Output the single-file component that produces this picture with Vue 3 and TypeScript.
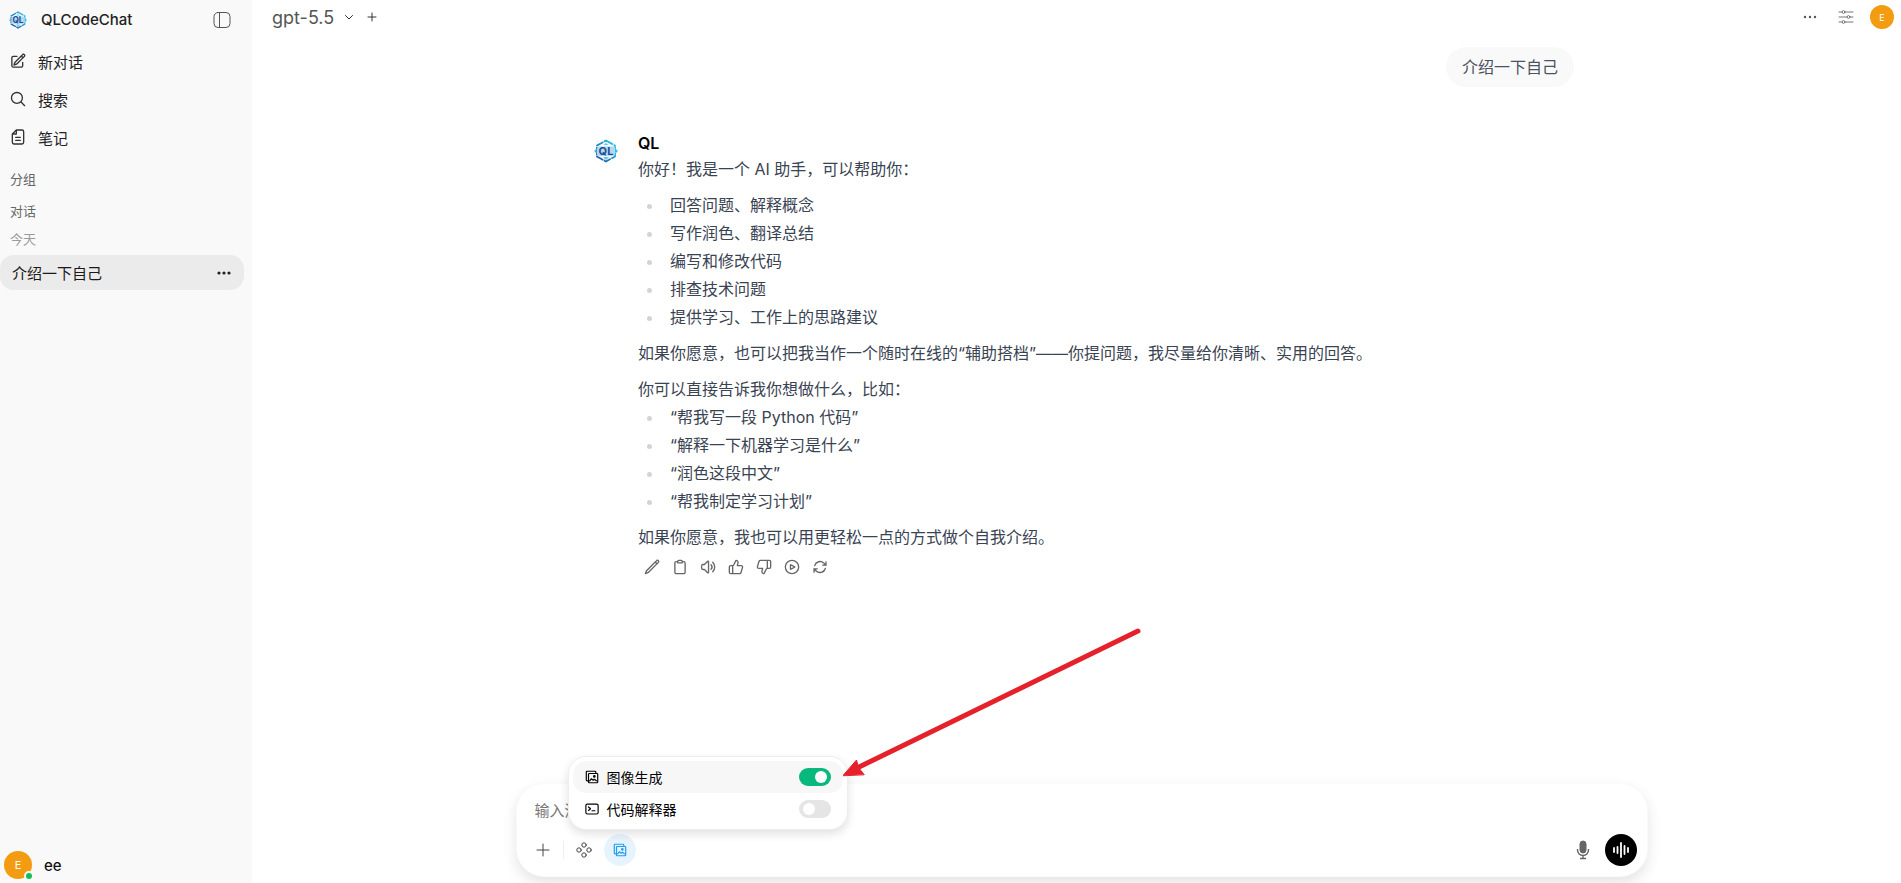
<script setup lang="ts">
import { ref } from 'vue'

interface NavItem { id: string; label: string }

const nav: NavItem[] = [
  { id: 'new', label: '新对话' },
  { id: 'search', label: '搜索' },
  { id: 'notes', label: '笔记' },
]
const abilities: string[] = ['回答问题、解释概念', '写作润色、翻译总结', '编写和修改代码', '排查技术问题', '提供学习、工作上的思路建议']
const examples: string[] = ['“帮我写一段 Python 代码”', '“解释一下机器学习是什么”', '“润色这段中文”', '“帮我制定学习计划”']
const actions: { label: string; d: string }[] = [
  { label: '编辑', d: 'M16.9 4.5l1.7-1.7a1.9 1.9 0 1 1 2.6 2.6L6.8 19.8a4.5 4.5 0 0 1-1.9 1.1L2.2 21.8l.9-2.7a4.5 4.5 0 0 1 1.1-1.9L16.9 4.5zM16.9 4.5l2.6 2.6' },
  { label: '复制', d: 'M8.5 4H6.5a2.2 2.2 0 0 0-2.2 2.2v13.6A2.2 2.2 0 0 0 6.5 22h11a2.2 2.2 0 0 0 2.2-2.2V6.2A2.2 2.2 0 0 0 17.5 4h-2M8.5 5.8V3.8A1.8 1.8 0 0 1 10.3 2h3.4a1.8 1.8 0 0 1 1.8 1.8v2z' },
  { label: '朗读', d: 'M19.1 4.9a10 10 0 0 1 0 14.2M16.5 8.5a5 5 0 0 1 0 7M6.7 8.2l4.800-4.700c.5-.5 1.300-.1 1.300.5v16c0 .6-.8 1-1.300.5l-4.800-4.700H4.500c-.9 0-1.700-.5-1.900-1.400a9.600 9.600 0 0 1 0-4.800c.2-.9 1-1.400 1.900-1.400z' },
  { label: '赞', d: 'M7 10v12M15 5.9L14 10h5.8a2 2 0 0 1 2 2.6l-2.4 8a2 2 0 0 1-1.9 1.4H4a2 2 0 0 1-2-2v-8a2 2 0 0 1 2-2h2.8a2 2 0 0 0 1.7-1.1L12 2a3.1 3.1 0 0 1 3 3.9z' },
  { label: '踩', d: 'M17 14V2M9 18.1L10 14H4.2a2 2 0 0 1-2-2.6l2.4-8A2 2 0 0 1 6.5 2H20a2 2 0 0 1 2 2v8a2 2 0 0 1-2 2h-2.8a2 2 0 0 0-1.7 1.1L12 22a3.1 3.1 0 0 1-3-3.9z' },
  { label: '继续生成', d: 'M22 12a10 10 0 1 1-20 0 10 10 0 0 1 20 0zM15.9 11.7a.4.4 0 0 1 0 .6l-5.6 3.1a.4.4 0 0 1-.6-.3V8.900a.4.4 0 0 1 .6-.3z' },
  { label: '重新生成', d: 'M16 9.3h5v-5M3 19.7v-5h5M3 14.7l3.2 3.2a8.3 8.3 0 0 0 13.8-3.7M4 9.9a8.3 8.3 0 0 1 13.8-3.7L21 9.3' },
]
const imageOn = ref(true)
const codeOn = ref(false)
const draft = ref('')
</script>

<template>
  <div class="app">
    <svg class="defs" aria-hidden="true">
      <defs>
        <linearGradient id="brand" x1="1" y1="0" x2="0" y2="1">
          <stop offset="0" stop-color="#2fd6e6" />
          <stop offset="0.5" stop-color="#2389cf" />
          <stop offset="1" stop-color="#1c4fa3" />
        </linearGradient>
        <symbol id="logo" viewBox="0 0 24 24">
          <path d="M12 1.500L21 6.500V17.500L12 22.500L3 17.500V6.500Z" fill="#f3fbff" stroke="url(#brand)" stroke-width="1.800" stroke-dasharray="8 .7" />
          <path d="M12 4l2.500 2h-5zM12 21l3-3H9z" fill="#35a9dc" opacity=".7" />
          <path d="M0 12l2.500-2.500v5zM24 12l-2.500-2.500v5z" fill="#2fc5e0" />
          <rect x="3" y="7.500" width="18" height="9.500" rx="2" fill="#b4d8ef" />
          <text x="12" y="16" text-anchor="middle" font-family="Inter, sans-serif" font-size="11" font-weight="700" fill="#1d4f97">QL</text>
        </symbol>
        <symbol id="images" viewBox="0 0 24 24">
          <path d="M18.500 5V3.500a1.300 1.300 0 0 0-1.300-1.300H3.500a1.300 1.300 0 0 0-1.300 1.300v13.700a1.300 1.300 0 0 0 1.300 1.300H5M7.300 6h13.200a1.300 1.300 0 0 1 1.300 1.300v13.200a1.300 1.300 0 0 1-1.300 1.300H7.300A1.300 1.300 0 0 1 6 20.500V7.300A1.300 1.300 0 0 1 7.300 6zM8 18.500l3-3.500 3 2.500 2-1.500 3.500 2.500" />
          <circle cx="16" cy="11" r="1.300" />
        </symbol>
      </defs>
    </svg>

    <aside class="sidebar">
      <header class="brand">
        <svg class="brand-logo"><use href="#logo" /></svg>
        <span class="brand-name">QLCodeChat</span>
        <button class="plain" aria-label="收起侧边栏">
          <svg class="ico panel" viewBox="0 0 18 18"><rect x="1" y="1.500" width="16" height="15" rx="4" /><path d="M6.500 1.500v15" /></svg>
        </button>
      </header>
      <nav>
        <button v-for="item in nav" :key="item.id" class="nav-item">
          <svg class="ico nav-ico" viewBox="0 0 24 24">
            <path v-if="item.id === 'new'" d="M16.900 4.500l1.700-1.700a1.900 1.900 0 1 1 2.600 2.600L10.600 16.100a4.500 4.500 0 0 1-1.900 1.100L6 18l.8-2.700a4.500 4.500 0 0 1 1.100-1.900zM16.900 4.500l2.600 2.600M19 14v5a2.300 2.300 0 0 1-2.300 2.300H5A2.300 2.300 0 0 1 2.800 19V7.300A2.300 2.300 0 0 1 5 5h5.500" />
            <path v-else-if="item.id === 'search'" d="M22 22l-5.800-5.800a8.200 8.200 0 1 0-11.600-11.600 8.200 8.200 0 0 0 11.600 11.600z" />
            <path v-else d="M9.500 1.500H18a2.500 2.500 0 0 1 2.500 2.500v16a2.500 2.500 0 0 1-2.500 2.500H6A2.500 2.500 0 0 1 3.500 20V7.500zM9.500 1.500v6h-6M8.500 12.500h7M8.500 17h7" />
          </svg>
          {{ item.label }}
        </button>
      </nav>
      <h2 class="section">分组</h2>
      <h2 class="section">对话</h2>
      <h3 class="day">今天</h3>
      <div class="chat-item">
        <a href="#">介绍一下自己</a>
        <button class="plain" aria-label="更多">
          <svg class="dots" viewBox="0 0 14 4"><circle cx="2" cy="2" r="1.600" /><circle cx="7" cy="2" r="1.600" /><circle cx="12" cy="2" r="1.600" /></svg>
        </button>
      </div>
      <button class="user">
        <span class="avatar">E<i class="online"></i></span>
        <span>ee</span>
      </button>
    </aside>

    <main class="main">
      <header class="topbar">
        <button class="model">
          gpt-5.5
          <svg class="ico chevron" viewBox="0 0 12 12"><path d="M2.500 4.500L6 8l3.500-3.500" /></svg>
        </button>
        <button class="plain" aria-label="添加模型"><svg class="ico small-plus" viewBox="0 0 12 12"><path d="M6 2v8M2 6h8" /></svg></button>
        <span class="grow"></span>
        <button class="plain" aria-label="更多选项">
          <svg class="dots top-dots" viewBox="0 0 14 4"><circle cx="2" cy="2" r="1.200" /><circle cx="7" cy="2" r="1.200" /><circle cx="12" cy="2" r="1.200" /></svg>
        </button>
        <button class="plain" aria-label="控制">
          <svg class="ico sliders" viewBox="0 0 16 14"><path d="M1 2h3M7 2h8M1 7h8M12 7h3M1 12h3M7 12h8" /><circle cx="5.500" cy="2" r="1.400" /><circle cx="10.500" cy="7" r="1.400" /><circle cx="5.500" cy="12" r="1.400" /></svg>
        </button>
        <button class="avatar top-avatar" aria-label="用户菜单">E</button>
      </header>

      <section class="thread">
        <p class="bubble">介绍一下自己</p>
        <article class="reply">
          <svg class="reply-logo"><use href="#logo" /></svg>
          <div class="body">
            <h1>QL</h1>
            <p>你好！我是一个 AI 助手，可以帮助你：</p>
            <ul class="spaced"><li v-for="a in abilities" :key="a">{{ a }}</li></ul>
            <p>如果你愿意，也可以把我当作一个随时在线的“辅助搭档”——你提问题，我尽量给你清晰、实用的回答。</p>
            <p class="lead">你可以直接告诉我你想做什么，比如：</p>
            <ul><li v-for="e in examples" :key="e">{{ e }}</li></ul>
            <p class="lead">如果你愿意，我也可以用更轻松一点的方式做个自我介绍。</p>
            <div class="actions">
              <button v-for="a in actions" :key="a.label" class="plain" :aria-label="a.label">
                <svg class="ico" viewBox="0 0 24 24"><path :d="a.d" /></svg>
              </button>
            </div>
          </div>
        </article>
      </section>

      <form class="composer" @submit.prevent>
        <input v-model="draft" class="prompt" type="text" placeholder="输入消息" aria-label="输入消息" />
        <div class="tools">
          <button type="button" class="tool" aria-label="添加"><svg class="ico plus" viewBox="0 0 14 14"><path d="M7 1v12M1 7h12" /></svg></button>
          <span class="divider"></span>
          <button type="button" class="tool" aria-label="工具">
            <svg class="ico quad" viewBox="0 0 16 16"><circle cx="8" cy="3" r="2.200" /><circle cx="3" cy="8" r="2.200" /><circle cx="13" cy="8" r="2.200" /><circle cx="8" cy="13" r="2.200" /></svg>
          </button>
          <button type="button" class="tool active" aria-label="图像生成"><svg class="ico image"><use href="#images" /></svg></button>
          <span class="grow"></span>
          <button type="button" class="tool" aria-label="语音输入">
            <svg class="mic" viewBox="0 0 14 20"><rect x="4" y="1" width="6" height="12" rx="3" /><path d="M1.500 9v1a5.500 5.500 0 0 0 11 0V9M7 15.500v3M4 18.500h6" /></svg>
          </button>
          <button type="button" class="tool voice" aria-label="语音通话">
            <svg viewBox="0 0 18 16"><path d="M2 6v4M5.500 5v6M9 1v14M12.500 4v8M16 6v4" /></svg>
          </button>
        </div>

        <div class="menu">
          <label class="option on">
            <svg class="ico image"><use href="#images" /></svg>
            <span>图像生成</span>
            <input v-model="imageOn" type="checkbox" role="switch" />
          </label>
          <label class="option">
            <svg class="ico image" viewBox="0 0 24 24"><rect x="1.500" y="3.500" width="21" height="17" rx="2.500" /><path d="M6 8.500l3.500 3L6 14.500M12 15h5" /></svg>
            <span>代码解释器</span>
            <input v-model="codeOn" type="checkbox" role="switch" />
          </label>
          <svg class="arrow" viewBox="0 0 300 152" aria-hidden="true">
            <path d="M295 5L14 142" />
            <path class="head" d="M0 149.500L13.500 134L15.500 141.500L21 148.500Z" />
          </svg>
        </div>
      </form>
    </main>
  </div>
</template>

<style>
body { margin: 0; background: #fff; }
</style>

<style scoped>
.app {
  display: grid;
  grid-template-columns: 252px 1fr;
  height: 100vh;
  overflow: hidden;
  font-family: Inter, "Noto Sans CJK SC", sans-serif;
  font-size: 15px;
  color: #222;
}
.defs { position: absolute; width: 0; height: 0; }
button { font: inherit; color: inherit; border: 0; padding: 0; background: none; cursor: pointer; }
h1, h2, h3, p, ul { margin: 0; padding: 0; }
svg { display: block; flex: none; }
.ico { width: 16px; height: 16px; fill: none; stroke: currentColor; stroke-width: 2; stroke-linecap: round; stroke-linejoin: round; }
.grow { flex: 1; }

.sidebar { display: flex; flex-direction: column; background: #f9f9f9; }
.brand { display: flex; align-items: center; height: 39px; padding: 0 21px 0 9px; }
.brand-logo { width: 18px; height: 18px; }
.brand-name { flex: 1; margin-left: 14px; font-weight: 500; }
.panel { width: 18px; height: 18px; stroke-width: 1; color: #555; }
nav { display: flex; flex-direction: column; padding-top: 3px; }
.nav-item { display: flex; align-items: center; gap: 12px; height: 38px; padding: 0 10px; text-align: left; }
.nav-ico { color: #333; }
.section, .day { height: 32px; padding-left: 10px; font-size: 13px; line-height: 32px; font-weight: 400; color: #666; }
.section:first-of-type { margin-top: 7px; }
.day { height: 28px; line-height: 24px; color: #9b9b9b; }
.chat-item { display: flex; align-items: center; justify-content: space-between; height: 35px; margin-right: 8px; padding: 0 13px 0 12px; border-radius: 14px; background: #ebebeb; }
.chat-item a { color: #1a1a1a; text-decoration: none; }
.dots { width: 14px; height: 4px; fill: #222; }
.user { display: flex; align-items: center; gap: 12px; margin-top: auto; padding: 4px; color: #111; font-weight: 500; }
.avatar { position: relative; display: grid; place-items: center; width: 28px; height: 28px; border-radius: 50%; background: #f39c12; color: #fff; font-size: 11px; font-weight: 400; }
.online { position: absolute; right: -2px; bottom: -2px; width: 6px; height: 6px; border: 2px solid #f9f9f9; border-radius: 50%; background: #10c057; }

.main { display: flex; flex-direction: column; min-width: 0; }
.topbar { display: flex; align-items: center; height: 34px; padding: 0 7px 0 20px; }
.model { display: flex; align-items: center; gap: 9px; font-size: 18px; color: #555; }
.chevron { width: 12px; height: 12px; stroke-width: 1; color: #333; }
.small-plus { width: 12px; height: 12px; margin-left: 11px; stroke-width: 1; color: #333; }
.top-dots { margin-right: 21px; fill: #555; }
.sliders { width: 16px; height: 14px; margin-right: 16px; stroke-width: 1; color: #777; }
.top-avatar { width: 24px; height: 24px; font-size: 9px; }

.thread { flex: 1; width: 980px; max-width: 90%; margin: 13px auto 0; padding-left: 15px; display: flex; flex-direction: column; }
.bubble { align-self: flex-end; padding: 6px 16px; border-radius: 20px; background: #f9f9f9; font-size: 16px; line-height: 28px; color: #4b5261; }
.reply { display: flex; gap: 20px; margin-top: 44px; }
.reply-logo { width: 24px; height: 24px; margin-top: 8px; }
.body { font-size: 16px; line-height: 28px; color: #3a4352; }
h1 { height: 24px; line-height: 24px; font-size: 16px; font-weight: 600; color: #000; }
ul { list-style: none; }
.spaced { margin: 8px 0; }
.lead { margin-top: 8px; }
li { display: flex; align-items: center; }
li::before { content: ""; width: 5px; height: 5px; margin: 2px 18px 0 9px; border-radius: 50%; background: #d1d5db; }
.actions { display: flex; gap: 12px; padding: 8px 6px; color: #666; }

.composer { position: relative; width: 1110px; max-width: 90%; margin: 0 auto 6px; left: 5px; padding: 10px; border-radius: 28px; border: 1px solid #fafafa; background: #fff; box-shadow: 0 6px 14px rgba(0, 0, 0, 0.11); }
.prompt { display: block; width: 100%; box-sizing: border-box; height: 32px; padding: 0 8px; border: 0; outline: 0; background: none; font: inherit; font-size: 15px; }
.prompt::placeholder { color: #777; opacity: 1; }
.tools { display: flex; align-items: center; padding-top: 8px; }
.tool { display: grid; place-items: center; width: 32px; height: 32px; border-radius: 50%; color: #444; }
.plus { width: 14px; height: 14px; stroke-width: 1; }
.divider { width: 1px; height: 18px; margin: 0 4px; background: #eee; }
.quad { stroke-width: 1; }
.active { margin-left: 4px; background: #e8f4fd; color: #1c9cf0; }
.image { width: 14px; height: 14px; }
.mic { width: 14px; height: 20px; fill: #666; stroke: #666; }
.mic path { fill: none; stroke-width: 1.400; }
.voice { margin-left: 6px; background: #000; }
.voice svg { width: 18px; height: 16px; fill: none; stroke: #fff; stroke-width: 1.800; stroke-linecap: round; }

.menu { position: absolute; left: 51px; bottom: 46px; width: 270px; padding: 4px; border: 1px solid #eee; border-radius: 18px; background: #fff; box-shadow: 0 4px 10px rgba(0, 0, 0, 0.12); font-size: 14px; color: #000; }
.option { display: flex; align-items: center; gap: 8px; height: 32px; padding: 0 12px; border-radius: 14px; }
.on { background: #f7f7f7; }
.option span { flex: 1; }
.option input { appearance: none; display: flex; align-items: center; width: 32px; height: 18px; margin: 0; padding: 0 4px; border-radius: 9px; background: #e5e5e5; cursor: pointer; }
.option input::before { content: ""; width: 12px; height: 12px; border-radius: 50%; background: #fff; }
.option input:checked { justify-content: flex-end; background: #09b87c; }
.arrow { position: absolute; left: 274px; bottom: 51px; width: 300px; height: 152px; fill: none; stroke: #e5222c; stroke-width: 5; stroke-linecap: round; pointer-events: none; }
.head { fill: #e5222c; stroke-width: 1; }
</style>
